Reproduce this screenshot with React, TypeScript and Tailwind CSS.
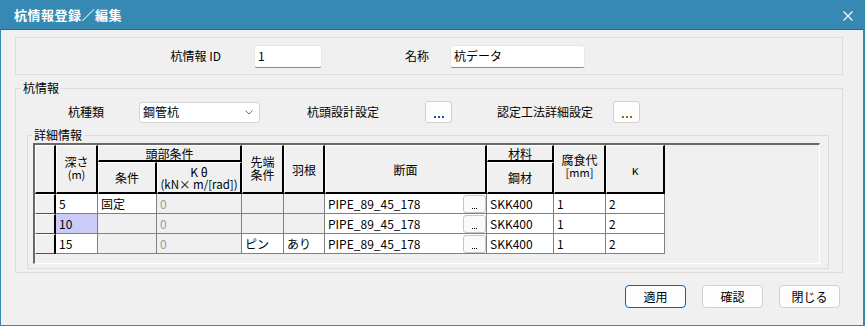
import React from "react";

const FONT = { fontFamily: '"Noto Sans CJK JP", "Noto Sans", sans-serif' };

type Row = {
  depth: string;
  cond?: string;
  tip?: string;
  wing?: string;
  selected?: boolean;
};

const rows: Row[] = [
  { depth: "5", cond: "固定" },
  { depth: "10", selected: true },
  { depth: "15", tip: "ピン", wing: "あり" },
];

const hd =
  "bg-[#f0f0f0] border-l border-t border-l-white border-t-white border-r-2 border-b-2 border-r-black border-b-black flex items-center justify-center text-center leading-[13px]";
const cell = "border-r border-b border-[#808080] flex items-center pl-[3px] overflow-hidden whitespace-nowrap";

function Dots({ color }: { color: string }) {
  return (
    <button className="w-[27px] h-[22px] bg-[#fdfdfd] border border-[#d0d0d0] rounded-[3px] flex items-end justify-center pb-[4px] gap-[2px]">
      <span className={`w-[2px] h-[2px] ${color}`} />
      <span className={`w-[2px] h-[2px] ${color}`} />
      <span className={`w-[2px] h-[2px] ${color}`} />
    </button>
  );
}

function DetailGrid() {
  return (
    <div className="ml-[1px] w-[787px] h-[121px] bg-[#f0f0f0] border-t-2 border-l-2 border-[#696969] border-r border-b border-r-white border-b-white text-[12px] text-black">
      <div className="grid grid-cols-[21px_42px_59px_85px_42px_41px_162px_67px_52px_59px] grid-rows-[17px_32px_20px_20px_20px] w-[630px]">
        {/* 見出し */}
        <div className={`${hd} col-start-1 row-start-1 row-span-2`} />
        <div className={`${hd} col-start-2 row-start-1 row-span-2 flex-col pb-[2px]`}>
          <span>深さ</span>
          <span className="text-[11px]">(m)</span>
        </div>
        <div className={`${hd} col-start-3 col-span-2 row-start-1`}>頭部条件</div>
        <div className={`${hd} col-start-3 row-start-2`}>条件</div>
        <div className={`${hd} col-start-4 row-start-2 flex-col`}>
          <span>K θ</span>
          <span className="text-[11.5px]">(kN× m/[rad])</span>
        </div>
        <div className={`${hd} col-start-5 row-start-1 row-span-2 flex-col pb-[2px]`}>
          <span>先端</span>
          <span>条件</span>
        </div>
        <div className={`${hd} col-start-6 row-start-1 row-span-2`}>羽根</div>
        <div className={`${hd} col-start-7 row-start-1 row-span-2`}>断面</div>
        <div className={`${hd} col-start-8 row-start-1`}>材料</div>
        <div className={`${hd} col-start-8 row-start-2`}>鋼材</div>
        <div className={`${hd} col-start-9 row-start-1 row-span-2 flex-col pb-[6px]`}>
          <span>腐食代</span>
          <span className="text-[11px]">[mm]</span>
        </div>
        <div className={`${hd} col-start-10 row-start-1 row-span-2`}>κ</div>

        {/* データ */}
        {rows.map((r, i) => (
          <React.Fragment key={i}>
            <div className="bg-[#f0f0f0] border-l border-t border-l-white border-t-white border-r-2 border-r-black border-b border-b-[#505050]" />
            <div className={`${cell} ${r.selected ? "bg-[#cbcbf8]" : "bg-white"}`}>{r.depth}</div>
            <div className={`${cell} ${r.cond ? "bg-white" : "bg-[#f0f0f0]"}`}>{r.cond}</div>
            <div className={`${cell} bg-[#f0f0f0] text-[#9a9a9a]`}>0</div>
            <div className={`${cell} ${r.tip ? "bg-white" : "bg-[#f0f0f0]"}`}>{r.tip}</div>
            <div className={`${cell} ${r.wing ? "bg-white" : "bg-[#f0f0f0]"}`}>{r.wing}</div>
            <div className={`${cell} bg-white justify-between pr-0`}>
              <span>PIPE_89_45_178</span>
              <span className="w-[23px] h-[18px] mt-[1px] bg-[#fafafa] border border-[#c8c8c8] rounded-[3px] flex items-end justify-center pb-[3px] gap-[1px]">
                <span className="w-px h-px bg-black" />
                <span className="w-px h-px bg-black" />
                <span className="w-px h-px bg-black" />
              </span>
            </div>
            <div className={`${cell} bg-white`}>SKK400</div>
            <div className={`${cell} bg-white`}>1</div>
            <div className={`${cell} bg-white`}>2</div>
          </React.Fragment>
        ))}
      </div>
    </div>
  );
}

export default function App() {
  return (
    <div className="w-[865px] h-[326px] bg-[#3689b3] flex flex-col pl-px pr-[2px] pb-px" style={FONT}>
      <div className="h-[30px] shrink-0 flex items-center justify-between pl-[13px] pr-[10px] border-b border-[#4c5d66] text-white">
        <span className="text-[13px] font-bold tracking-[0.5px]">杭情報登録／編集</span>
        <svg className="w-[10px] h-[10px] mt-[3px]" viewBox="0 0 10 10" stroke="white" strokeWidth={1.1}>
          <path d="M0.5 0.5 L9.5 9.5 M9.5 0.5 L0.5 9.5" />
        </svg>
      </div>

      <div className="flex-1 bg-[#f0f0f0] flex flex-col text-[12px] text-black">
        {/* ID・名称 */}
        <div className="mt-[7px] ml-[14px] w-[828px] h-[38px] shrink-0 border border-[#dcdcdc] flex items-center">
          <span className="w-[205px] text-right whitespace-nowrap">杭情報 ID</span>
          <div className="ml-[33px] w-[68px] h-[23px] bg-white border border-[#e6e6e6] border-b-[#8a8a8a] rounded-[3px] pl-[3px] leading-[20px]">1</div>
          <span className="ml-[83px] w-[24px] whitespace-nowrap">名称</span>
          <div className="ml-[21px] w-[135px] h-[23px] bg-white border border-[#e6e6e6] border-b-[#8a8a8a] rounded-[3px] pl-[3px] leading-[20px]">杭データ</div>
        </div>

        {/* 杭情報 */}
        <fieldset className="mt-[5px] ml-[14px] w-[828px] h-[193px] shrink-0 border border-[#dcdcdc] pl-[5px]">
          <legend className="px-[2px] leading-[16px]">杭情報</legend>
          <div className="mt-[5px] h-[22px] flex items-center">
            <span className="ml-[47px] w-[36px] whitespace-nowrap">杭種類</span>
            <div className="ml-[35px] w-[121px] h-[21px] bg-white border border-[#d4d4d4] rounded-[3px] flex items-center justify-between pl-[3px] pr-[6px]">
              <span>鋼管杭</span>
              <svg className="w-[8px] h-[5px]" viewBox="0 0 8 5" fill="none" stroke="#707070" strokeWidth={1}>
                <path d="M0.5 0.5 L4 4 L7.5 0.5" />
              </svg>
            </div>
            <span className="ml-[47px] w-[72px] whitespace-nowrap">杭頭設計設定</span>
            <div className="ml-[46px]">
              <Dots color="bg-[#1f55b0]" />
            </div>
            <span className="ml-[45px] w-[96px] whitespace-nowrap">認定工法詳細設定</span>
            <div className="ml-[20px]">
              <Dots color="bg-[#a2621a]" />
            </div>
          </div>

          {/* 詳細情報 */}
          <fieldset className="mt-[4px] ml-[6px] w-[802px] h-[142px] border border-[#dcdcdc] pl-[4px]">
            <legend className="px-[2px] leading-[16px]">詳細情報</legend>
            <DetailGrid />
          </fieldset>
        </fieldset>

        {/* ボタン */}
        <div className="mt-[12px] flex justify-end gap-[16px] pr-[23px]">
          <button className="w-[61px] h-[23px] bg-[#fdfdfd] border border-[#0067c0] rounded-[4px] text-[12px]">適用</button>
          <button className="w-[61px] h-[23px] bg-[#fdfdfd] border border-[#d0d0d0] rounded-[4px] text-[12px]">確認</button>
          <button className="w-[61px] h-[23px] bg-[#fdfdfd] border border-[#d0d0d0] rounded-[4px] text-[12px]">閉じる</button>
        </div>
      </div>
    </div>
  );
}
